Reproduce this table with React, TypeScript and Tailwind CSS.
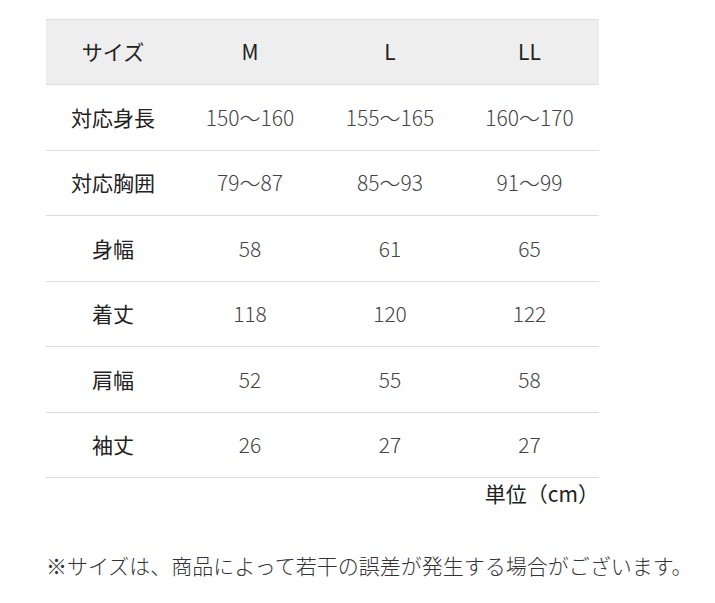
import React from "react";

const rows: [string, string, string, string][] = [
  ["対応身長", "150～160", "155～165", "160～170"],
  ["対応胸囲", "79～87", "85～93", "91～99"],
  ["身幅", "58", "61", "65"],
  ["着丈", "118", "120", "122"],
  ["肩幅", "52", "55", "58"],
  ["袖丈", "26", "27", "27"],
];

export default function App() {
  return (
    <div
      className="w-[715px] h-[603px] bg-white text-[#333333] pt-[19px] pl-[46px]"
      style={{ fontFamily: '"Noto Sans CJK JP", "Noto Sans", sans-serif' }}
    >
      <div className="w-[553px]">
        <div className="grid grid-cols-[134px_140px_140px_139px] h-[66px] bg-[#eeeeee] border-t border-b border-[#dddddd] items-center text-[21px] text-[#222222]">
          <div className="text-center">サイズ</div>
          <div className="text-center">M</div>
          <div className="text-center">L</div>
          <div className="text-center">LL</div>
        </div>
        {rows.map((r) => (
          <div
            key={r[0]}
            className="grid grid-cols-[134px_140px_140px_139px] h-[65.5px] border-b border-[#dddddd] items-center text-[21px]"
          >
            <div className="text-center text-[#222222]">{r[0]}</div>
            <div className="text-center font-light text-[#444444]">{r[1]}</div>
            <div className="text-center font-light text-[#444444]">{r[2]}</div>
            <div className="text-center font-light text-[#444444]">{r[3]}</div>
          </div>
        ))}
        <div className="text-right text-[21px] leading-[30px] text-[#222222]">単位（cm）</div>
      </div>
      <div className="mt-[41px] text-[21px] leading-[32px] font-light text-[#333333]">
        ※サイズは、商品によって若干の誤差が発生する場合がございます。
      </div>
    </div>
  );
}
